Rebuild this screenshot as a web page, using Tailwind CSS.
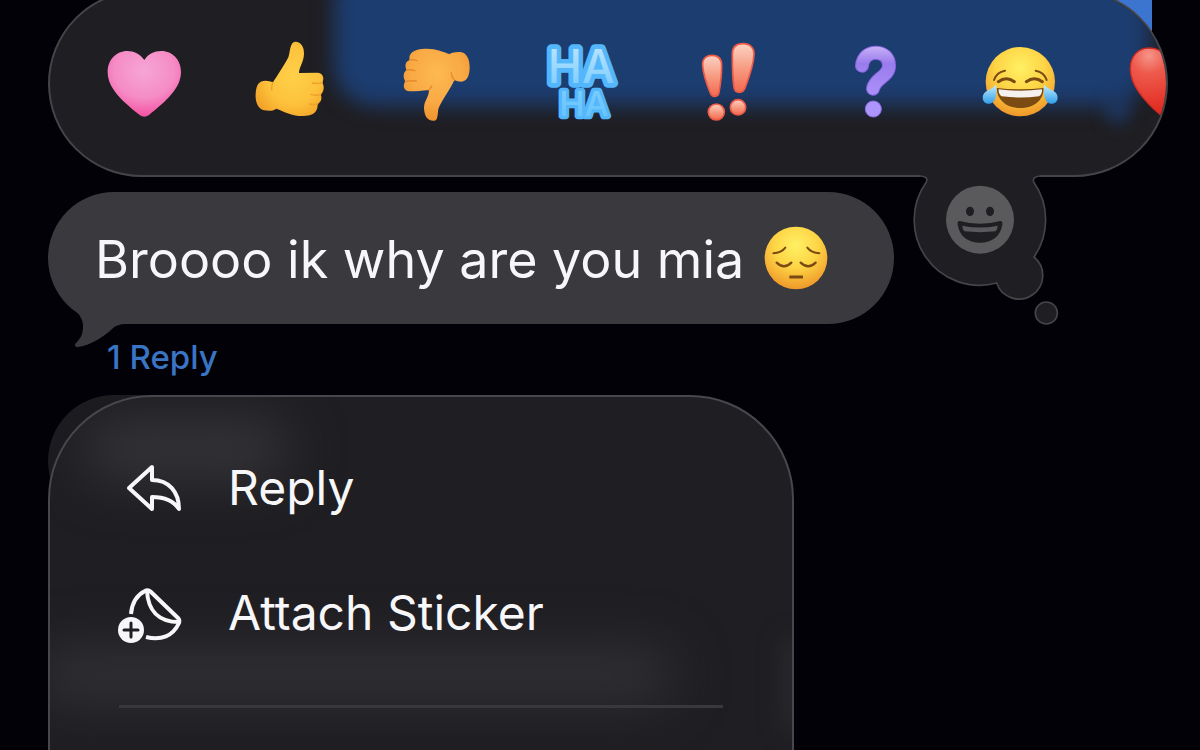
<!DOCTYPE html>
<html lang="en">
<head>
  <meta charset="UTF-8">
  <meta name="viewport" content="width=device-width, initial-scale=1.0">
  <title>Messages</title>
  <script src="https://cdn.jsdelivr.net/npm/@tailwindcss/browser@4"></script>
</head>
<body class="bg-[#020107] text-[#f7f7f9] font-['Inter','Liberation_Sans',sans-serif]">
  <main class="relative h-screen overflow-hidden">
    <!-- sent bubble behind the reaction bar -->
    <div class="absolute top-0 right-12 w-96 h-12 bg-[#3b75d0]"></div>

    <header class="relative ml-12 mr-8 -mt-[10px]">
      <div class="relative h-[187px] rounded-full border-2 border-[#454448] bg-[#1f1e22] overflow-hidden">
        <div class="absolute -top-8 left-[284px] right-4 h-[146px] rounded-[40px] bg-[#1c3d70] blur-[10px]"></div>
        <div class="absolute top-[104px] right-[36px] w-6 h-7 rounded-full bg-[#1c3d70]/70 blur-[8px]"></div>
        <div class="relative flex h-full pl-[21px]">
          <button aria-label="Heart" class="w-[146px] shrink-0 flex items-center justify-center">
            <svg class="size-[90px]" viewBox="177 115 270 270">
              <defs>
                <radialGradient id="pink" cx=".5" cy=".3" r=".75"><stop offset="0" stop-color="#f6a5d6"/><stop offset=".55" stop-color="#f58cc6"/><stop offset="1" stop-color="#f4479b"/></radialGradient>
              </defs>
              <path fill="url(#pink)" d="M313 178C300 160 282 151 262 151C228 151 203 178 203 214C203 262 245 300 300 344Q313 353 327 343C380 300 423 262 423 214C423 178 398 151 364 151C343 151 324 160 313 178Z"/>
            </svg>
          </button>
          <button aria-label="Thumbs up" class="w-[146px] shrink-0 flex items-center justify-center">
            <svg class="size-[90px]" viewBox="618 115 270 270">
              <defs>
                <radialGradient id="hand" cx=".55" cy=".45" r=".65"><stop offset="0" stop-color="#ffd04a"/><stop offset=".6" stop-color="#fdc23b"/><stop offset="1" stop-color="#f2a128"/></radialGradient>
              </defs>
              <path fill="url(#hand)" d="M770 123C785 123 796 138 795 160C794 185 780 200 780 217L835 216C852 217 857 232 850 246C857 258 855 272 845 282C850 292 847 303 836 310C836 335 825 345 790 346C760 346 740 335 712 324C700 332 690 331 675 329C655 325 648 300 650 278C652 252 660 240 680 240Q692 240 702 245C715 225 735 195 748 170C754 155 752 122 770 123Z"/>
              <path fill="none" stroke="#eda02c" stroke-width="4" stroke-linecap="round" d="M820 247Q838 250 850 246M816 281Q832 286 845 282M812 310Q826 313 836 310M702 245Q696 258 698 268"/>
            </svg>
          </button>
          <button aria-label="Thumbs down" class="w-[146px] shrink-0 flex items-center justify-center">
            <svg class="size-[90px]" viewBox="36 115 270 270">
              <defs>
                <radialGradient id="handDown" cx=".5" cy=".35" r=".65"><stop offset="0" stop-color="#fdb951"/><stop offset=".6" stop-color="#f9aa44"/><stop offset="1" stop-color="#ef932f"/></radialGradient>
              </defs>
              <path fill="url(#handDown)" d="M140 144C170 143 195 155 212 160C222 155 235 153 248 155C266 160 272 180 272 200C272 225 264 243 247 243Q235 243 226 238C215 265 188 298 178 325C175 345 177 360 165 360C148 361 136 350 135 322C135 300 150 290 150 268C130 270 110 272 92 272C74 272 70 255 79 242C72 230 72 215 83 208C76 195 80 182 92 178C88 160 100 145 140 144Z"/>
              <path fill="none" stroke="#e68b2c" stroke-width="4" stroke-linecap="round" d="M92 178Q104 176 114 180M83 208Q96 206 108 210M79 242Q94 239 112 241M150 268Q156 262 158 256M226 238Q217 228 217 216"/>
            </svg>
          </button>
          <button aria-label="Haha" class="w-[146px] shrink-0 flex items-center justify-center">
            <svg class="size-[90px]" viewBox="474 115 270 270">
              <defs>
                <linearGradient id="haha" x1="0" y1="0" x2="0" y2="1"><stop offset=".1" stop-color="#b9e3ff"/><stop offset=".6" stop-color="#7accfe"/><stop offset="1" stop-color="#62c2fe"/></linearGradient>
              </defs>
              <text fill="url(#haha)" stroke="#55b7fb" stroke-linejoin="round" paint-order="stroke" text-anchor="middle" font-family="Inter" font-weight="500">
                <tspan x="609" y="246" font-size="138" stroke-width="28">HA</tspan>
                <tspan x="615" y="346" font-size="102" stroke-width="20">HA</tspan>
              </text>
            </svg>
          </button>
          <button aria-label="Exclamation" class="w-[146px] shrink-0 flex items-center justify-center">
            <svg class="size-[90px]" viewBox="132 115 270 270">
              <defs>
                <linearGradient id="bang" x1="0" y1="0" x2="0" y2="1"><stop offset="0" stop-color="#fbd3c4"/><stop offset=".5" stop-color="#f79c83"/><stop offset="1" stop-color="#f3694f"/></linearGradient>
              </defs>
              <g fill="url(#bang)" stroke="#ee5a45" stroke-width="5">
                <path d="M191 195C189 175 201 164 219 164C238 164 248 176 248 195C248 225 243 258 240 275C237 290 220 292 214 277C205 255 193 225 191 195Z"/>
                <path d="M280 160C280 140 292 129 312 129C333 129 346 142 345 162C343 198 328 235 318 262C312 279 288 280 285 260C281 235 280 195 280 160Z"/>
                <circle cx="232" cy="334" r="24"/>
                <circle cx="297" cy="320" r="23"/>
              </g>
            </svg>
          </button>
          <button aria-label="Question" class="w-[146px] shrink-0 flex items-center justify-center">
            <svg class="size-[90px]" viewBox="570 115 270 270">
              <defs>
                <linearGradient id="ask" gradientUnits="userSpaceOnUse" x1="0" y1="135" x2="0" y2="290"><stop offset="0" stop-color="#c9b2f8"/><stop offset=".35" stop-color="#9a7bec"/><stop offset="1" stop-color="#ac92fa"/></linearGradient>
              </defs>
              <path fill="none" stroke="#8767e0" stroke-width="42" stroke-linecap="round" d="M669 195C672 168 690 156 710 156C735 156 750 172 750 195C750 228 708 232 702 264"/>
              <path fill="none" stroke="url(#ask)" stroke-width="36" stroke-linecap="round" d="M669 195C672 168 690 156 710 156C735 156 750 172 750 195C750 228 708 232 702 264"/>
              <circle cx="703" cy="325" r="24" fill="#ad95fb" stroke="#8e6fe6" stroke-width="3"/>
            </svg>
          </button>
          <button aria-label="Tears of joy" class="w-[146px] shrink-0 flex items-center justify-center">
            <svg class="size-[90px]" viewBox="228 115 270 270">
              <defs>
                <radialGradient id="face" cx=".5" cy=".3" r=".72"><stop offset="0" stop-color="#fff064"/><stop offset=".5" stop-color="#fdd445"/><stop offset="1" stop-color="#ee9428"/></radialGradient>
                <linearGradient id="tear" x1="0" y1="0" x2="0" y2="1"><stop offset="0" stop-color="#c6eeff"/><stop offset="1" stop-color="#2f9fec"/></linearGradient>
              </defs>
              <circle cx="364" cy="243" r="104" fill="url(#face)"/>
              <g fill="none" stroke="#7a4a12" stroke-linecap="round">
                <path stroke-width="6" d="M285 238Q293 214 318 210M443 238Q435 214 410 210"/>
                <path stroke-width="9" d="M298 243Q322 226 346 243M382 243Q406 226 430 243"/>
              </g>
              <path fill="#7c4b14" d="M293 262Q364 270 434 262C434 300 404 322 364 322C324 322 294 300 293 262Z"/>
              <path fill="#f4f1f0" d="M299 266Q364 274 429 266Q430 280 420 287Q364 294 308 287Q298 280 299 266Z"/>
              <path fill="url(#tear)" d="M291 252C296 275 291 308 270 309C249 309 246 285 259 274C272 264 284 262 291 252ZM436 252C431 275 436 308 457 309C478 309 481 285 468 274C455 264 443 262 436 252Z"/>
            </svg>
          </button>
          <button aria-label="Red heart" class="w-[146px] shrink-0 flex items-center justify-center">
            <svg class="size-[90px]" viewBox="666 115 270 270">
              <defs>
                <radialGradient id="red" gradientUnits="userSpaceOnUse" cx="750" cy="165" r="180"><stop offset="0" stop-color="#f6958a"/><stop offset=".3" stop-color="#ee5a4c"/><stop offset="1" stop-color="#e0261d"/></radialGradient>
              </defs>
              <path fill="url(#red)" stroke="#cf2a20" stroke-width="4" d="M801 168C788 150 770 142 750 142C716 142 694 168 694 204C694 252 733 300 788 345Q801 356 815 344C868 300 908 252 908 204C908 168 886 142 852 142C832 142 812 150 801 168Z"/>
            </svg>
          </button>
        </div>
      </div>

      <!-- emoji picker thought bubble, hangs from the bar -->
      <button aria-label="More emoji" class="absolute top-[170px] right-[88px] size-[180px]">
        <svg class="size-full" viewBox="0 0 540 540">
          <path fill="#1f1e22" d="M62 38V50Q86 50 79 66A196 196 0 0 0 290 369A71 71 0 1 0 402 291A196 196 0 0 0 401 66Q396 50 420 50V38Z"/>
          <path fill="none" stroke="#454448" stroke-width="5" d="M62 48Q86 50 79 66A196 196 0 0 0 290 369A71 71 0 1 0 402 291A196 196 0 0 0 401 66Q396 50 420 48"/>
          <circle cx="439" cy="459" r="33" fill="#1f1e22" stroke="#454448" stroke-width="5"/>
          <circle cx="240" cy="179" r="102" fill="#5a5a5c"/>
          <g fill="#1f1e22">
            <ellipse cx="210" cy="154" rx="12" ry="14"/>
            <ellipse cx="270" cy="154" rx="12" ry="14"/>
            <path d="M180 183Q240 200 300 183Q309 182 307 194C302 228 276 248 240 248C204 248 178 228 173 194Q171 182 180 183Z"/>
          </g>
          <path fill="#5a5a5c" d="M187 197Q240 208 293 197Q293 207 287 214Q240 219 193 214Q187 207 187 197Z"/>
        </svg>
      </button>
    </header>

    <section class="px-12 pt-[15px]">
      <div class="relative flex items-center w-fit h-[132px] pl-[47px] pr-[66px] rounded-full bg-[#3a393d]">
        <svg class="absolute left-[26px] top-[116px] w-[60px] h-10" viewBox="0 0 60 40" fill="#3a393d">
          <path d="M0 0C6 7 9 12 9 18C9 26 7 30 2 35C0 37 1 39 4 39C18 37 32 27 38 21Q43 16 52 16L50 0Z"/>
        </svg>
        <p class="pt-1 text-[52px] leading-[64px] whitespace-nowrap">Broooo ik why are you mia</p>
        <svg class="ml-5 size-16 shrink-0" viewBox="110 139 192 192" role="img" aria-label="Pensive face">
          <circle cx="206" cy="235" r="94" fill="url(#face)"/>
          <g fill="none" stroke="#7a4a12" stroke-linecap="round">
            <path stroke-width="6" d="M138 221Q162 220 174 204M276 221Q252 220 240 204"/>
            <path stroke-width="7" d="M148 249Q170 271 192 249M220 249Q243 271 265 249"/>
            <path stroke-width="9" stroke-linecap="butt" d="M186 292H227"/>
          </g>
        </svg>
      </div>
      <a href="#" class="block w-fit mt-3 ml-[59px] text-[33px] leading-[42px] font-medium text-[#3a74c4]">1 Reply</a>

      <div class="relative mt-[17px]">
        <!-- next message, showing from behind the menu -->
        <div class="absolute top-0 left-0 w-64 h-[132px] rounded-[66px] bg-[#1c1b20]"></div>
        <div class="relative w-full max-w-[746px] h-[480px] pt-7 rounded-t-[104px] border-2 border-[#48474c] bg-[#1f1e22] overflow-hidden">
          <div class="absolute top-5 left-8 w-52 h-16 rounded-full bg-[#343337] blur-[26px]"></div>
          <div class="absolute top-[250px] -left-4 w-[640px] h-14 rounded-full bg-[#313035] blur-[26px]"></div>
          <div class="absolute top-[240px] -right-4 w-6 h-24 rounded-full bg-[#2b2a2e] blur-[12px]"></div>
          <ul class="relative px-[69px]">
            <li>
              <button class="flex items-center gap-[45px] w-full h-[125px] text-left text-[48px] leading-[60px]">
                <svg class="size-16 shrink-0" viewBox="0 0 64 64" fill="none" stroke="currentColor" stroke-width="4" stroke-linejoin="round">
                  <path d="M10 32L33 11V24C50 24 60 36 60 53C54 44 45 41 33 41V53Z"/>
                </svg>
                Reply
              </button>
            </li>
            <li>
              <button class="flex items-center gap-[45px] w-full h-[125px] text-left text-[48px] leading-[60px]">
                <svg class="size-16 shrink-0 overflow-visible" viewBox="0 0 64 64" fill="none" stroke="currentColor" stroke-width="4" stroke-linejoin="round">
                  <path d="M12 33C13 21 18 14 26 10Q29 8 32 11L59 37Q61 39 60 42C54 55 42 60 27 56"/>
                  <path d="M28 10C29 29 39 41 60 41"/>
                  <circle cx="12" cy="49" r="13" fill="currentColor" stroke="none"/>
                  <path stroke="#1f1e22" stroke-width="3" stroke-linecap="round" d="M5 49H19M12 42V56"/>
                </svg>
                Attach Sticker
              </button>
            </li>
          </ul>
          <hr class="relative mt-[30px] mx-[69px] border-0 h-[3px] bg-[#39383c]">
        </div>
      </div>
    </section>
  </main>
</body>
</html>
